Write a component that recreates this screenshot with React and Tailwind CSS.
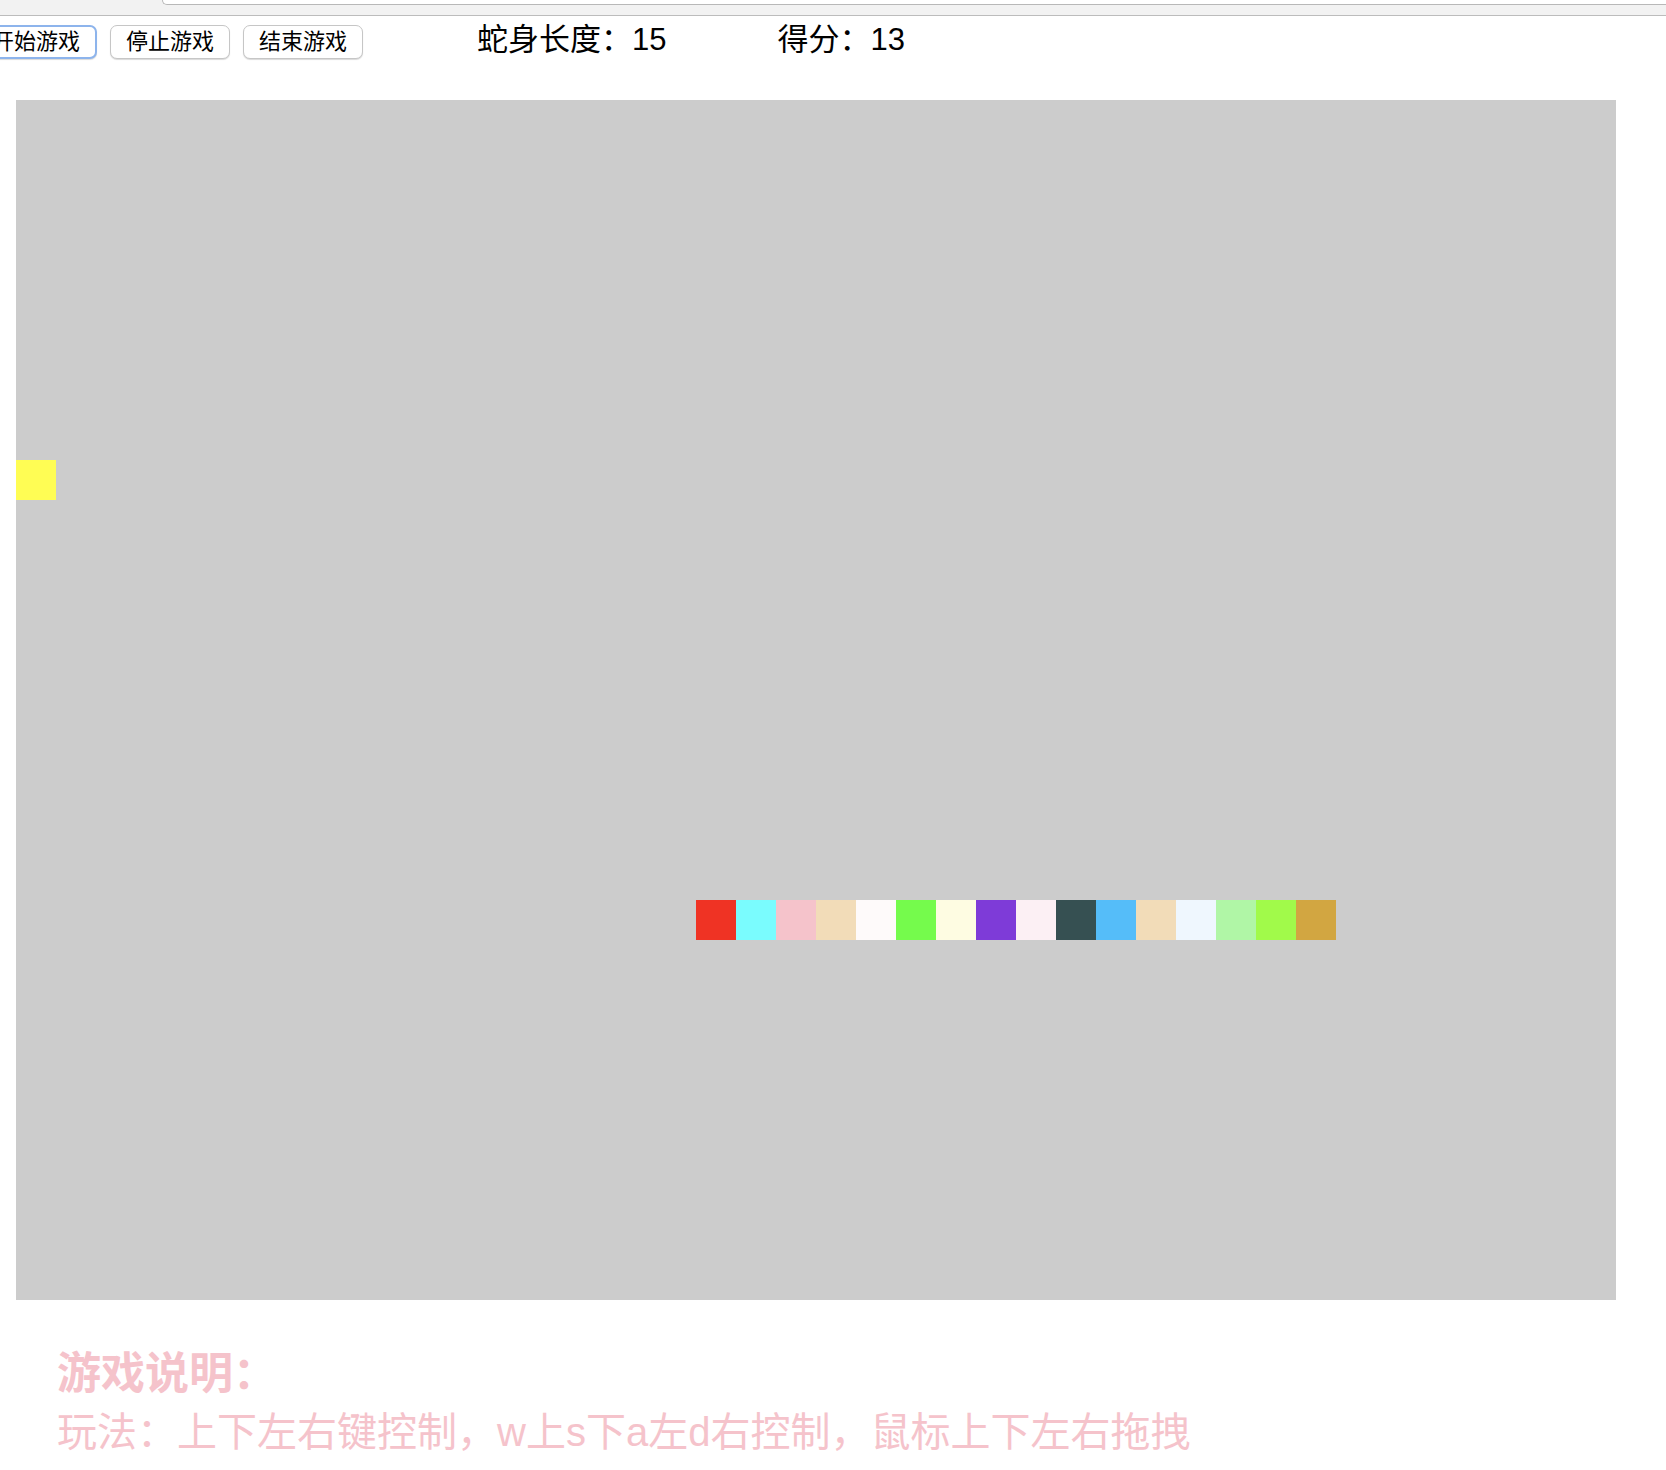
import React from "react";

const FONT = { fontFamily: '"Liberation Sans", "Noto Sans CJK SC", sans-serif' };

// snake body, head first; x/y are grid cells of 40px
const SNAKE = [
  "#ef3324",
  "#7afcfe",
  "#f5c3cb",
  "#f2dcb8",
  "#fefafa",
  "#75fb4c",
  "#fefce2",
  "#7e3bd8",
  "#fcf0f4",
  "#365052",
  "#55bdf9",
  "#f2dcb8",
  "#eff7fe",
  "#b0f6a6",
  "#a1fa4a",
  "#d2a641",
].map((color, i) => ({ x: 17 + i, y: 20, color }));

const FOOD = { x: 0, y: 9 };

function GameButton({ children, focused }) {
  return (
    <button
      className={
        "h-[34px] px-[15px] rounded-[7px] bg-white text-[22px] leading-none text-black shadow-[0_1px_1px_rgba(0,0,0,0.15)] " +
        (focused ? "border-2 border-[#8db4ec]" : "border border-[#c6c6c6]")
      }
    >
      {children}
    </button>
  );
}

export default function App() {
  return (
    <div className="w-[1666px] min-h-[1470px] bg-white overflow-hidden" style={FONT}>
      {/* browser chrome edge */}
      <div className="flex h-[16px] bg-[#f2f2f2] border-b border-[#bcbcbc]">
        <div className="ml-[162px] flex-1 h-[5px] bg-white border-b border-l border-[#b8b8b8] rounded-bl-[6px]" />
      </div>

      {/* toolbar */}
      <div className="flex items-center h-[50px] pt-[2px]">
        <div className="flex items-center gap-[13px] -ml-[25px]">
          <GameButton focused>开始游戏</GameButton>
          <GameButton>停止游戏</GameButton>
          <GameButton>结束游戏</GameButton>
        </div>
        <span className="ml-[114px] text-[31px] leading-none text-black -mt-[6px]">蛇身长度：15</span>
        <span className="ml-[111px] text-[31px] leading-none text-black -mt-[6px]">得分：13</span>
      </div>

      {/* board */}
      <div className="relative ml-[16px] mt-[34px] w-[1600px] h-[1200px] bg-[#cccccc]">
        <div
          className="absolute w-[40px] h-[40px] bg-[#fffd54]"
          style={{ left: FOOD.x * 40, top: FOOD.y * 40 }}
        />
        {SNAKE.map((s, i) => (
          <div
            key={i}
            className="absolute w-[40px] h-[40px]"
            style={{ left: s.x * 40, top: s.y * 40, background: s.color }}
          />
        ))}
      </div>

      {/* instructions */}
      <div className="ml-[57px] mt-[48px] text-[#f5c3cb]">
        <h3 className="text-[44px] leading-[52px] font-bold">游戏说明：</h3>
        <p className="text-[40px] leading-[64px]">玩法：上下左右键控制，w上s下a左d右控制，鼠标上下左右拖拽</p>
      </div>
    </div>
  );
}
